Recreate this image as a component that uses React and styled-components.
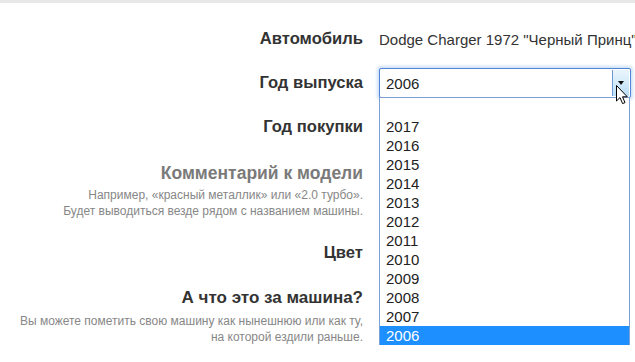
import React from "react";
import styled, { createGlobalStyle } from "styled-components";

const GlobalStyle = createGlobalStyle`
  html, body {
    margin: 0;
    padding: 0;
    background: #fff;
    overflow: hidden;
  }
  body {
    font-family: "Liberation Sans", Arial, sans-serif;
    color: #333;
  }
`;

const TopStrip = styled.div`
  height: 3px;
  background: #e8e8e8;
`;

const Form = styled.div`
  display: flex;
  flex-direction: column;
  padding-top: 21px;
  width: 635px;
`;

const Row = styled.div`
  display: grid;
  grid-template-columns: 363px 1fr;
  column-gap: 16px;
  align-items: ${(p) => (p.$top ? "start" : "center")};
  min-height: ${(p) => (p.$top ? "0" : "30px")};
  margin-top: ${(p) => p.$mt || 0}px;
`;

const LabelCell = styled.div`
  text-align: right;
`;

const Label = styled.div`
  font-weight: bold;
  line-height: 20px;
  color: ${(p) => (p.$muted ? "#7a7a7a" : "#333")};
  font-size: ${(p) => p.$size || 16.6}px;
`;

const Help = styled.div`
  margin-top: ${(p) => p.$mt || 4}px;
  font-size: 12px;
  line-height: 16px;
  color: #878787;
`;

const Value = styled.div`
  font-size: 15px;
  color: #333;
  white-space: nowrap;
`;

const SelectWrap = styled.div`
  position: relative;
  width: 252px;
`;

const SelectBox = styled.div`
  display: flex;
  align-items: center;
  justify-content: space-between;
  height: 28px;
  border: 1px solid #4f86d6;
  border-radius: 2px;
  box-shadow: 0 0 3px 2px rgba(120, 170, 235, 0.35);
  background: #fff;
  font-size: 15px;
  color: #222;
  padding-left: 6px;
`;

const ArrowButton = styled.div`
  width: 16px;
  height: 26px;
  margin-right: 1px;
  border-left: 1px solid #6f9ad8;
  background: linear-gradient(to bottom, #eaf5fd 0%, #d4ebfa 50%, #b9ddf6 100%);
  display: flex;
  align-items: center;
  justify-content: center;
`;

const Triangle = styled.div`
  width: 0;
  height: 0;
  border-left: 3.5px solid transparent;
  border-right: 3.5px solid transparent;
  border-top: 4px solid #111;
`;

const List = styled.div`
  position: absolute;
  top: 29px;
  left: 0;
  width: 249px;
  border: 1px solid #7c9fd6;
  background: #fff;
  z-index: 2;
`;

const Option = styled.div`
  height: 19px;
  line-height: 19px;
  padding-left: 6px;
  font-size: 15px;
  color: ${(p) => (p.$selected ? "#fff" : "#222")};
  background: ${(p) => (p.$selected ? "#1e8fff" : "transparent")};
`;

const Cursor = styled.svg`
  position: absolute;
  left: 237px;
  top: 17px;
  z-index: 3;
`;

const years = ["", "2017", "2016", "2015", "2014", "2013", "2012", "2011", "2010", "2009", "2008", "2007", "2006"];

export default function App() {
  return (
    <>
      <GlobalStyle />
      <TopStrip />
      <Form>
        <Row>
          <LabelCell>
            <Label>Автомобиль</Label>
          </LabelCell>
          <Value>Dodge Charger 1972 "Черный Принц"</Value>
        </Row>
        <Row $mt={14}>
          <LabelCell>
            <Label>Год выпуска</Label>
          </LabelCell>
          <SelectWrap>
            <SelectBox>
              <span>2006</span>
              <ArrowButton>
                <Triangle />
              </ArrowButton>
            </SelectBox>
            <List>
              {years.map((y, i) => (
                <Option key={i} $selected={y === "2006"}>
                  {y || "\u00a0"}
                </Option>
              ))}
            </List>
            <Cursor width="13" height="20" viewBox="0 0 13 20">
              <path
                d="M0.5 0.5 L0.5 16 L4 12.6 L6.6 18.6 L9 17.6 L6.5 11.8 L11.3 11.8 Z"
                fill="#fff"
                stroke="#000"
                strokeWidth="1"
                strokeLinejoin="miter"
              />
            </Cursor>
          </SelectWrap>
        </Row>
        <Row $mt={14}>
          <LabelCell>
            <Label>Год покупки</Label>
          </LabelCell>
          <div />
        </Row>
        <Row $top $mt={21}>
          <LabelCell>
            <Label $muted $size={17.5}>Комментарий к модели</Label>
            <Help>
              Например, «красный металлик» или «2.0 турбо».
              <br />
              Будет выводиться везде рядом с названием машины.
            </Help>
          </LabelCell>
          <div />
        </Row>
        <Row $mt={19}>
          <LabelCell>
            <Label>Цвет</Label>
          </LabelCell>
          <div />
        </Row>
        <Row $top $mt={20}>
          <LabelCell>
            <Label $size={17}>А что это за машина?</Label>
            <Help $mt={5}>
              Вы можете пометить свою машину как нынешнюю или как ту,
              <br />
              на которой ездили раньше.
            </Help>
          </LabelCell>
          <div />
        </Row>
      </Form>
    </>
  );
}
